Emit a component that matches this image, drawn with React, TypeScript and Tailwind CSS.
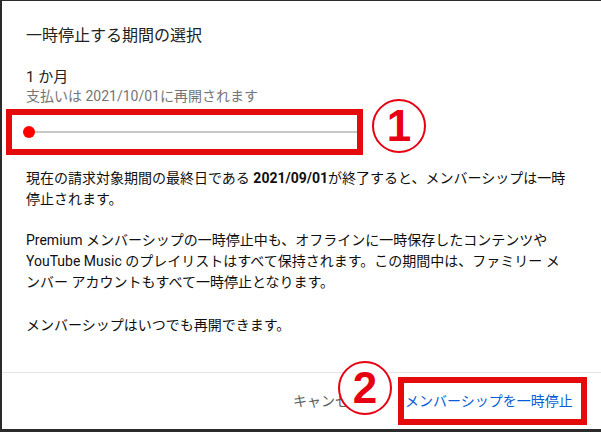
import React from 'react';

const font = "font-['Roboto','Noto_Sans_CJK_JP',sans-serif]";

const CircledNumber: React.FC<{ n: string; className?: string }> = ({ n, className }) => (
  <div
    className={`flex h-[54px] w-[54px] items-center justify-center rounded-full border-2 border-[#e60012] font-['Liberation_Sans',sans-serif] text-[44px] font-bold leading-none text-[#e60012] ${className ?? ''}`}
  >
    <span>{n}</span>
  </div>
);

export default function App() {
  return (
    <div className={`h-[432px] w-[601px] overflow-hidden bg-[#2b2b2b] ${font}`}>
      <div className="ml-[2px] mt-[1px] flex h-[428px] flex-col bg-white">
        <div className="flex-1 px-6 pt-[23px]">
          <h2 className="text-base leading-6 text-[#212121]">一時停止する期間の選択</h2>

          <div className="mt-5 text-[15px] leading-[18px] text-[#212121]">1 か月</div>
          <div className="text-sm leading-5 text-[#757575]">支払いは 2021/10/01に再開されます</div>

          {/* slider + annotation ① */}
          <div className="ml-[-20px] mt-[3px] flex items-start gap-[9px]">
            <div className="flex h-[46px] w-[357px] items-center border-[6px] border-[#e30b0b] pl-[11px]">
              <div className="h-3 w-3 rounded-full bg-[#ff0000]" />
              <div className="h-[2px] flex-1 bg-[#c8c8c8]" />
            </div>
            <CircledNumber n="1" className="-mt-[10px]" />
          </div>

          <p className="mt-[13px] text-sm leading-[21px] text-[#0f0f0f]">
            現在の請求対象期間の最終日である <span className="font-bold">2021/09/01</span>が終了すると、メンバーシップは一時
            <br />
            停止されます。
          </p>

          <p className="mt-5 text-sm leading-[21px] text-[#0f0f0f]">
            Premium メンバーシップの一時停止中も、オフラインに一時保存したコンテンツや
            <br />
            YouTube Music のプレイリストはすべて保持されます。この期間中は、ファミリー メ
            <br />
            ンバー アカウントもすべて一時停止となります。
          </p>

          <p className="mt-[22px] text-sm leading-[21px] text-[#0f0f0f]">メンバーシップはいつでも再開できます。</p>
        </div>

        {/* footer */}
        <div className="relative flex h-[57px] items-center justify-end border-t border-[#e5e5e5] pr-[14px]">
          <span className="mr-[35px] text-sm text-[#606060]">キャンセル</span>
          <div className="flex h-[48px] w-[189px] items-center border-[6px] border-[#e30b0b] pl-[1px]">
            <span className="text-sm text-[#065fd4]">メンバーシップを一時停止</span>
          </div>
          {/* annotation ② sits over the cancel button */}
          <CircledNumber n="2" className="absolute left-[336px] top-[-12px] bg-white" />
        </div>
      </div>
    </div>
  );
}
